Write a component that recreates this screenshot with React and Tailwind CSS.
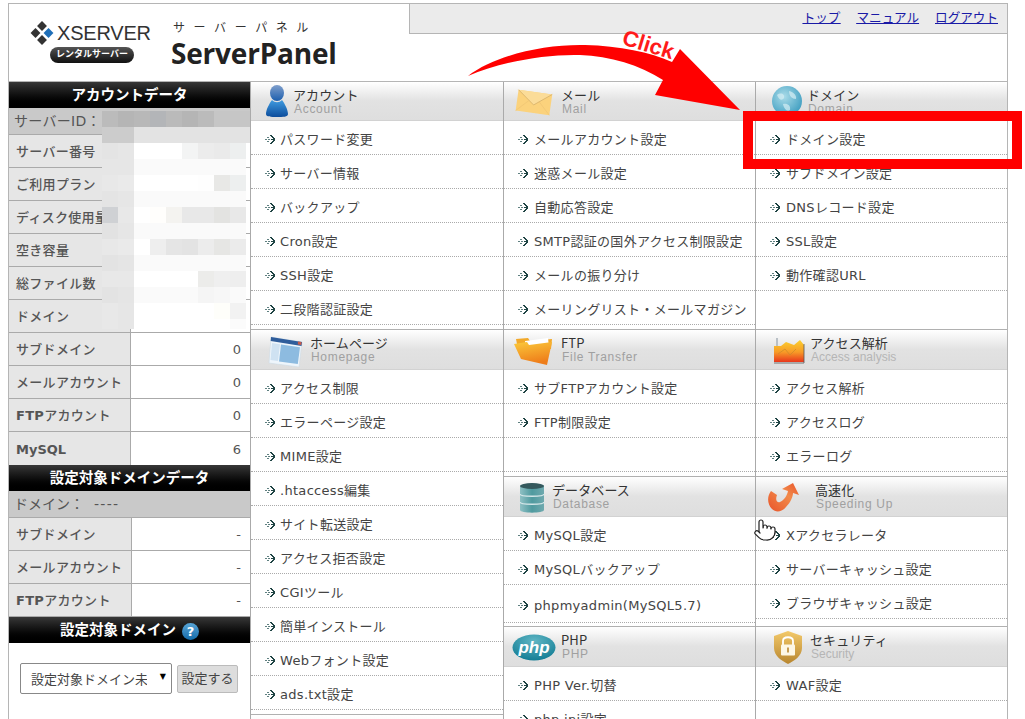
import React from "react";
import { Pointer } from "lucide-react";

// 左カラムのモザイク (16px 角)
const W = "#ffffff";
const F = "#fafafa";
const mosaic = [
  ["#bbbbbb", "#b5b5b5", "#b8b8b8", "#b3b5b8", "#bababa", "#b5b5b5", "#bbbbbb", "#c6c6c6", "#c6c6c6", "#c6c6c6"],
  ["#cccccc", "#cccccc", "#e3e3e3", "#e3e3e3", "#e3e3e3", "#e3e3e3", "#e3e3e3", "#e3e3e3", "#e3e3e3", "#e3e3e3"],
  ["#e4e4e4", "#e6e6e6", W, W, W, "#f3f4f4", "#ececec", "#eaeaea", "#edefef", "transparent"],
  ["#e6e6e6", "#e6e6e6", F, F, F, F, F, F, F, "transparent"],
  ["#e8e8e8", "#eaeaea", W, W, W, W, "#fefefe", "#e8e8e6", "#edefef", "transparent"],
  ["#e4e4e4", "#e6e6e6", F, F, F, F, F, F, F, "transparent"],
  ["#cfd1d4", "#e8e8e8", W, "#fffefc", "#f4f3f0", "#e8e8e8", "#e8e8e8", "#e3e3e1", "#e8e8e8", "transparent"],
  ["#e2e2e2", "#e6e6e6", F, F, F, F, F, F, F, "transparent"],
  ["#e8e8e8", "#eaeaea", W, "#eeeeee", "#e5e5e5", "#e3e3e3", "#ececec", "#e6e6e4", "#ebebeb", "transparent"],
  ["#e3e3e3", "#e5e5e5", F, F, F, F, F, F, F, "transparent"],
  ["#e8e8e8", "#e8e8e8", W, W, W, W, "#ececea", "#efefef", "#eeeeee", "transparent"],
  ["#e3e3e3", "#e5e5e5", F, F, F, F, "#f5f5f5", "#f7f7f7", F, "transparent"],
  ["#e8e8e8", "#e6e6e6", W, W, W, W, W, "#fefefa", "#f2f2f2", "transparent"],
  ["#e8e8e8", "#e6e6e6", W, W, W, W, W, W, "#fbfbfb", "transparent"],
];

function Bullet({ wide }) {
  return (
    <svg width="11" height="11" viewBox="0 0 11 11" className={`${wide ? "mr-[5px]" : "mr-[4px]"} shrink-0`}>
      <g fill="#5f8080">
        <rect x="0" y="5" width="2" height="1" />
        <rect x="2" y="3" width="2" height="1" />
        <rect x="2" y="7" width="2" height="1" />
        <rect x="3" y="5" width="2" height="1" />
      </g>
      <g fill="#1f4444">
        <rect x="5" y="1" width="2" height="1" />
        <rect x="6" y="2" width="2" height="1" />
        <rect x="7" y="3" width="2" height="1" />
        <rect x="8" y="4" width="2" height="1" />
        <rect x="6" y="5" width="4" height="1" />
        <rect x="8" y="6" width="2" height="1" />
        <rect x="7" y="7" width="2" height="1" />
        <rect x="6" y="8" width="2" height="1" />
        <rect x="5" y="9" width="2" height="1" />
      </g>
    </svg>
  );
}

function PersonIcon() {
  return (
    <svg width="24" height="34" viewBox="0 0 24 34" className="absolute left-[14px] top-[2px]">
      <defs>
        <linearGradient id="p1" x1="0" y1="0" x2="0" y2="1">
          <stop offset="0" stopColor="#7f9ecb" />
          <stop offset="1" stopColor="#1d5fae" />
        </linearGradient>
        <linearGradient id="p2" x1="0" y1="0" x2="0" y2="1">
          <stop offset="0" stopColor="#3f9be0" />
          <stop offset="1" stopColor="#0d4d9c" />
        </linearGradient>
      </defs>
      <ellipse cx="12" cy="9" rx="7" ry="8" fill="url(#p1)" />
      <path d="M7 16 C4 20 1 26 1 30 C1 33 6 33 12 33 C18 33 23 33 23 30 C23 26 20 20 17 16 C14 19 10 19 7 16 Z" fill="url(#p2)" />
    </svg>
  );
}

function MailIcon() {
  return (
    <svg width="38" height="30" viewBox="0 0 38 30" className="absolute left-[11px] top-[5px]">
      <g transform="rotate(8 19 15)">
        <rect x="2" y="5" width="34" height="21" fill="#fbd27c" />
        <path d="M2 5 L19 18 L36 5" fill="#fbdc98" stroke="#d8b26a" strokeWidth="0.8" />
        <path d="M2 26 L14 14 M36 26 L24 14" stroke="#efc473" strokeWidth="0.7" />
      </g>
    </svg>
  );
}

function GlobeIcon() {
  return (
    <svg width="32" height="32" viewBox="0 0 32 32" className="absolute left-[15px] top-[3px]">
      <defs>
        <radialGradient id="g1" cx="0.4" cy="0.35" r="0.7">
          <stop offset="0" stopColor="#a9dbe8" />
          <stop offset="1" stopColor="#3e9dc0" />
        </radialGradient>
      </defs>
      <circle cx="16" cy="16" r="15" fill="url(#g1)" />
      <path d="M6 10 C10 7 14 9 13 13 C11 16 8 15 6 10 Z M18 6 C23 7 26 11 25 14 C21 14 18 11 18 6 Z M12 19 C16 18 20 20 19 25 C16 27 13 24 12 19 Z" fill="#d5eef4" opacity="0.7" />
    </svg>
  );
}

function WindowIcon() {
  return (
    <svg width="36" height="32" viewBox="0 0 36 32" className="absolute left-[17px] top-[5px]">
      <path d="M3 2 L34 7 L31 32 L1 28 Z" fill="#eef5fb" stroke="#cfdbe6" strokeWidth="0.6" />
      <path d="M3 2 L34 7 L33.5 11 L2.7 6 Z" fill="#2f5d9b" />
      <path d="M30 6.5 L33.5 7 L33.2 10 L29.8 9.4 Z" fill="#c95b4a" />
      <path d="M4 8 L12 9.2 L10 26 L2.5 25 Z" fill="#cfe2f2" />
      <path d="M13 9.5 L32 12.2 L29.8 29 L11 26.5 Z" fill="#8dbbe0" />
    </svg>
  );
}

function FolderIcon() {
  return (
    <svg width="40" height="32" viewBox="0 0 40 32" className="absolute left-[10px] top-[5px]">
      <defs>
        <linearGradient id="f1" x1="0" y1="0" x2="0.3" y2="1">
          <stop offset="0" stopColor="#fbc93a" />
          <stop offset="1" stopColor="#ee7d1a" />
        </linearGradient>
      </defs>
      <path d="M2 4 L14 3 L16 6 L38 4 L37 14 L4 14 Z" fill="#f2a92a" />
      <path d="M11 6 L34 3 L35 12 L12 13 Z" fill="#ffffff" />
      <path d="M0 9 L13 7 L15 10 L38 7 L33 30 L7 24 Z" fill="url(#f1)" />
    </svg>
  );
}

function ChartIcon() {
  return (
    <svg width="34" height="30" viewBox="0 0 34 30" className="absolute left-[16px] top-[6px]">
      <defs>
        <linearGradient id="c1" x1="0" y1="0" x2="0" y2="1">
          <stop offset="0" stopColor="#fbd12e" />
          <stop offset="0.55" stopColor="#f79a27" />
          <stop offset="1" stopColor="#e8361c" />
        </linearGradient>
      </defs>
      <path d="M4 2 L6 2 L6 14 L4 14 Z" fill="#b9c0c6" />
      <path d="M2 10 L9 10 L14 6 L22 9 L28 4 L32 9 L32 26 L2 26 Z" fill="url(#c1)" />
      <path d="M6 18 L13 13 L18 19 L24 13" fill="none" stroke="#d08a2a" strokeWidth="0.8" />
      <path d="M32 8 L32 27 L2 27" fill="none" stroke="#555555" strokeWidth="0.8" />
    </svg>
  );
}

function DatabaseIcon() {
  return (
    <svg width="26" height="32" viewBox="0 0 26 32" className="absolute left-[15px] top-[5px]">
      <defs>
        <linearGradient id="d1" x1="0" y1="0" x2="1" y2="0">
          <stop offset="0" stopColor="#8fc0c4" />
          <stop offset="0.5" stopColor="#4f9a9f" />
          <stop offset="1" stopColor="#6fa9ae" />
        </linearGradient>
      </defs>
      <path d="M1 4 C1 1 25 1 25 4 L25 28 C25 31.5 1 31.5 1 28 Z" fill="url(#d1)" />
      <ellipse cx="13" cy="4" rx="12" ry="3" fill="#34585c" />
      <path d="M1 12 C1 15 25 15 25 12 M1 20 C1 23 25 23 25 20" fill="none" stroke="#d4e6e8" strokeWidth="1.4" />
    </svg>
  );
}

function SpeedIcon() {
  return (
    <svg width="36" height="32" viewBox="0 0 36 32" className="absolute left-[10px] top-[5px]">
      <defs>
        <linearGradient id="s1" x1="0" y1="1" x2="1" y2="0">
          <stop offset="0" stopColor="#e8542a" />
          <stop offset="0.6" stopColor="#f28a4a" />
          <stop offset="1" stopColor="#e8542a" />
        </linearGradient>
      </defs>
      <path d="M5 9 C1 14 1 22 6 27 C10 31 16 30 20 25 C25 20 27 14 27 11 L33 13 L27 1 L16 7 L22 9 C21 14 18 18 14 20 C11 21 9 18 11 13 Z" fill="url(#s1)" />
    </svg>
  );
}

function PhpIcon() {
  return (
    <svg width="44" height="27" viewBox="0 0 44 27" className="absolute left-[8px] top-[7px]">
      <defs>
        <radialGradient id="h1" cx="0.5" cy="0.25" r="0.8">
          <stop offset="0" stopColor="#5fb6c4" />
          <stop offset="1" stopColor="#0f7a92" />
        </radialGradient>
      </defs>
      <ellipse cx="22" cy="13.5" rx="21.5" ry="13" fill="url(#h1)" />
      <text x="22" y="19" textAnchor="middle" fontFamily="'Liberation Sans', sans-serif" fontSize="17" fontWeight="700" fontStyle="italic" fill="#ffffff">php</text>
    </svg>
  );
}

function ShieldIcon() {
  return (
    <svg width="30" height="35" viewBox="0 0 30 35" className="absolute left-[17px] top-[3px]">
      <defs>
        <linearGradient id="sh1" x1="0" y1="0" x2="0" y2="1">
          <stop offset="0" stopColor="#f3c96a" />
          <stop offset="1" stopColor="#b8862f" />
        </linearGradient>
      </defs>
      <path d="M15 1 L29 6 L29 18 C29 26 21 31 15 34 C9 31 1 26 1 18 L1 6 Z" fill="url(#sh1)" />
      <path d="M10 15 L10 11 C10 6 20 6 20 11 L20 15" fill="none" stroke="#ffffff" strokeWidth="1.8" />
      <rect x="8" y="14.5" width="14" height="11" rx="1" fill="#fdf7e6" />
      <rect x="14.2" y="17.5" width="1.6" height="5" fill="#b8862f" />
    </svg>
  );
}

function Section({ title, sub, icon, slot, first, subClass, rows, lastClass, gapClass, wide }) {
  return (
    <section className={gapClass}>
      <div
        className={`relative flex items-center bg-linear-to-b from-[#ffffff] via-[#e2e2e2] via-50% to-[#dedede] border-b border-[#d2d2d2] ${
          first ? "h-[39px]" : "h-[41px] border-t border-t-[#b0b0b0]"
        }`}
      >
        {icon}
        <div className={`${slot} shrink-0`} />
        <div className="pt-[1px]">
          <div className="font-['Noto_Sans_CJK_JP',sans-serif] text-[13px] leading-[14px] tracking-[0.1px] text-[#333333]">{title}</div>
          <div className={`ml-[1px] font-['Liberation_Sans',sans-serif] text-[12px] leading-[14px] text-[#a0a0a0] ${subClass || "tracking-[0.7px]"}`}>{sub}</div>
        </div>
      </div>
      {rows.map((r, i) => (
        <div
          key={i}
          className={`flex items-center pl-[14px] pt-[4px] text-[13px] tracking-[0.3px] text-[#444444] ${
            r === null ? "" : "border-b border-dotted border-[#aaaaaa]"
          } ${i === rows.length - 1 && lastClass ? lastClass : "h-[34px]"}`}
        >
          {r && (
            <>
              <Bullet wide={wide} />
              <a className="whitespace-nowrap">{r}</a>
            </>
          )}
        </div>
      ))}
    </section>
  );
}

function SideHead({ children }) {
  return (
    <div className="flex h-[26px] items-center justify-center bg-linear-to-b from-[#383838] to-[#000000] pt-[2px] text-[14.5px] font-bold text-white">
      {children}
    </div>
  );
}

function SideRow({ label, value, cell }) {
  return (
    <div className="flex h-[33px] border-b border-[#aaaaaa] text-[13px] text-[#555555]">
      <div className={`${cell} flex shrink-0 items-center overflow-hidden whitespace-nowrap border-r border-[#aaaaaa] bg-[#e6e6e6] pl-[7px] pt-[2px] font-medium tracking-[0.3px]`}>
        {label}
      </div>
      <div className="flex flex-1 items-center justify-end pr-[9px] pt-[2px]">{value}</div>
    </div>
  );
}

function FtpLabel() {
  return (
    <>
      <b>FTP</b>アカウント
    </>
  );
}

function Sidebar() {
  return (
    <aside className="relative w-[242px] shrink-0 border-r border-[#aaaaaa]">
      <SideHead>アカウントデータ</SideHead>
      <div className="flex h-[27px] items-center border-b border-[#aaaaaa] bg-[#c9c9c9] pl-[5px] text-[14px] tracking-[0.3px] text-[#555555]">
        サーバーID：
      </div>
      <SideRow label="サーバー番号" cell="w-[122px]" />
      <SideRow label="ご利用プラン" cell="w-[122px]" />
      <SideRow label="ディスク使用量" cell="w-[122px]" />
      <SideRow label="空き容量" cell="w-[122px]" />
      <SideRow label="総ファイル数" cell="w-[122px]" />
      <SideRow label="ドメイン" cell="w-[122px]" />
      <SideRow label="サブドメイン" value="0" cell="w-[122px]" />
      <SideRow label="メールアカウント" value="0" cell="w-[122px]" />
      <SideRow label={<FtpLabel />} value="0" cell="w-[122px]" />
      <div className="flex h-[33px] text-[13px] text-[#555555]">
        <div className="flex w-[122px] shrink-0 items-center border-r border-[#aaaaaa] bg-[#e6e6e6] pl-[7px] pt-[2px] font-bold">MySQL</div>
        <div className="flex flex-1 items-center justify-end pr-[9px] pt-[2px]">6</div>
      </div>
      <SideHead>設定対象ドメインデータ</SideHead>
      <div className="flex h-[27px] items-center border-b border-[#aaaaaa] bg-[#c9c9c9] pl-[5px] text-[14px] text-[#555555]">
        ドメイン：<span className="ml-[10px] tracking-[1.3px]">----</span>
      </div>
      <SideRow label="サブドメイン" value="-" cell="w-[123px]" />
      <SideRow label="メールアカウント" value="-" cell="w-[123px]" />
      <SideRow label={<FtpLabel />} value="-" cell="w-[123px]" />
      <SideHead>
        <span>設定対象ドメイン</span>
        <span className="ml-[6px] flex h-[17px] w-[17px] items-center justify-center rounded-full bg-linear-to-b from-[#58a6d8] to-[#0f6aa8] text-[13px] font-bold leading-none text-white">
          ?
        </span>
      </SideHead>
      <div className="flex items-start pl-[11px] pt-[20px]">
        <div className="relative">
          <select className="h-[31px] w-[152px] appearance-none rounded-[2px] border border-[#888888] bg-white pl-[10px] pr-[24px] pt-[2px] text-[13px] text-[#444444]">
            <option>設定対象ドメイン未設定</option>
          </select>
          <span className="absolute right-[6px] top-[8px] text-[8px] text-black">▼</span>
        </div>
        <button className="ml-[5px] mt-[2px] h-[28px] w-[61px] rounded-[2px] border border-[#bbbbbb] bg-[#dddddd] text-[13px] text-[#444444]">
          設定する
        </button>
      </div>
      {/* 個人情報のモザイク */}
      <div className="absolute left-[93px] top-[29px] grid grid-cols-[repeat(9,16px)_4px]">
        {mosaic.flatMap((row, y) =>
          row.map((c, x) => (
            <div key={y + "-" + x} className={y === 13 ? "h-[10px]" : "h-[16px]"} style={{ backgroundColor: c }} />
          ))
        )}
      </div>
    </aside>
  );
}

function Header() {
  return (
    <header className="flex h-[77px]">
      <div className="w-[400px] shrink-0 flex">
        <div className="ml-[21px] mt-[17px] w-[121px]">
          <div className="flex items-center">
            <svg width="24" height="24" viewBox="0 0 24 24" className="shrink-0">
              <rect x="8.5" y="1.5" width="7" height="7" transform="rotate(45 12 5)" fill="#333333" />
              <rect x="2" y="8.5" width="7" height="7" transform="rotate(45 5.5 12)" fill="#333333" />
              <rect x="8.5" y="15.5" width="7" height="7" transform="rotate(45 12 19)" fill="#333333" />
              <rect x="15" y="8.5" width="7" height="7" transform="rotate(45 18.5 12)" fill="#1f6fb8" />
            </svg>
            <span className="ml-[3px] font-['Liberation_Sans',sans-serif] text-[20px] leading-[24px] tracking-[-0.2px] text-[#333333]">XSERVER</span>
          </div>
          <div className="ml-[20px] mt-[2px] flex h-[16px] w-[84px] items-center justify-center rounded-full bg-linear-to-b from-[#555555] to-[#111111] text-[9px] font-bold text-white">
            レンタルサーバー
          </div>
        </div>
        <div className="ml-[20px] mt-[16px]">
          <div className="ml-[2px] whitespace-nowrap text-[12px] leading-[17px] tracking-[8.6px] text-[#333333]">サーバーパネル</div>
          <div className="font-['Open_Sans',sans-serif] text-[28px] font-bold leading-[32px] tracking-[-0.2px] text-[#222222]">ServerPanel</div>
        </div>
      </div>
      <nav className="flex h-[30px] flex-1 items-center justify-end gap-[16px] border-b border-l border-[#b5b5b5] bg-[#ebebeb] pr-[9px] text-[12.6px] text-[#1a1aa6] underline">
        <a>トップ</a>
        <a>マニュアル</a>
        <a>ログアウト</a>
      </nav>
    </header>
  );
}

export default function App() {
  return (
    <div className="relative h-[719px] w-[1025px] overflow-hidden bg-white font-['DejaVu_Sans','Noto_Sans_CJK_JP',sans-serif]">
      <div className="ml-[8px] mt-[3px] w-[1000px] border-x border-t border-[#b5b5b5]">
        <Header />
        <div className="flex border-t border-[#b5b5b5]">
          <Sidebar />
          <div className="w-[253px] shrink-0 border-r border-[#aaaaaa]">
            <Section
              first
              title="アカウント"
              sub="Account"
              icon={<PersonIcon />}
              slot="w-[42px]"
              gapClass="mb-[4px]"
              rows={["パスワード変更", "サーバー情報", "バックアップ", "Cron設定", "SSH設定", "二段階認証設定"]}
            />
            <Section
              title="ホームページ"
              sub="Homepage"
              icon={<WindowIcon />}
              slot="w-[59px]"
              gapClass="mb-[4px]"
              rows={[
                "アクセス制限",
                "エラーページ設定",
                "MIME設定",
                ".htaccess編集",
                "サイト転送設定",
                "アクセス拒否設定",
                "CGIツール",
                "簡単インストール",
                "Webフォント設定",
                "ads.txt設定",
              ]}
            />
            <div className="h-[41px] border-t border-[#b0b0b0] bg-linear-to-b from-[#ffffff] to-[#e2e2e2]" />
          </div>
          <div className="w-[252px] shrink-0 border-r border-[#aaaaaa]">
            <Section
              first
              wide
              title="メール"
              sub="Mail"
              icon={<MailIcon />}
              slot="w-[57px]"
              gapClass="mb-[4px]"
              rows={["メールアカウント設定", "迷惑メール設定", "自動応答設定", "SMTP認証の国外アクセス制限設定", "メールの振り分け", "メーリングリスト・メールマガジン"]}
            />
            <Section
              wide
              title="FTP"
              sub="File Transfer"
              icon={<FolderIcon />}
              slot="w-[57px]"
              gapClass="mb-[4px]"
              rows={["サブFTPアカウント設定", "FTP制限設定", ""]}
            />
            <Section
              wide
              title="データベース"
              sub="Database"
              icon={<DatabaseIcon />}
              slot="w-[48px]"
              gapClass="mb-[3px]"
              lastClass="h-[38px]"
              rows={["MySQL設定", "MySQLバックアップ", "phpmyadmin(MySQL5.7)"]}
            />
            <Section
              wide
              title="PHP"
              sub="PHP"
              icon={<PhpIcon />}
              slot="w-[57px]"
              rows={["PHP Ver.切替", "php.ini設定"]}
            />
          </div>
          <div className="w-[251px] shrink-0">
            <Section
              first
              wide
              title="ドメイン"
              sub="Domain"
              icon={<GlobeIcon />}
              slot="w-[51px]"
              gapClass="mb-[4px]"
              rows={["ドメイン設定", "サブドメイン設定", "DNSレコード設定", "SSL設定", "動作確認URL", null]}
            />
            <Section
              wide
              title="アクセス解析"
              sub="Access analysis"
              subClass="tracking-normal text-[#b5b5b5]"
              icon={<ChartIcon />}
              slot="w-[54px]"
              gapClass="mb-[4px]"
              rows={["アクセス解析", "アクセスログ", "エラーログ"]}
            />
            <Section
              wide
              title="高速化"
              sub="Speeding Up"
              icon={<SpeedIcon />}
              slot="w-[59px]"
              gapClass="mb-[7px]"
              rows={["Xアクセラレータ", "サーバーキャッシュ設定", "ブラウザキャッシュ設定"]}
            />
            <Section
              wide
              title="セキュリティ"
              sub="Security"
              subClass="tracking-normal text-[#b5b5b5]"
              icon={<ShieldIcon />}
              slot="w-[54px]"
              rows={["WAF設定", null]}
            />
          </div>
        </div>
      </div>

      {/* 説明用の赤い注釈 */}
      <svg viewBox="460 40 290 80" className="pointer-events-none absolute left-[460px] top-[40px] h-[80px] w-[290px]">
        <path
          d="M468 76 C495 55 545 44 585 45 C620 46 650 52 672 62 L680 49 L740 110 L655 95 L663 80 C640 65 610 56 580 55 C545 54 500 62 468 76 Z"
          fill="#ff0000"
        />
      </svg>
      <div className="pointer-events-none absolute left-[622px] top-[32px] rotate-[17deg] font-['Liberation_Sans',sans-serif] text-[22px] font-bold leading-[26px] text-[#ff1a1a]">
        Click
      </div>
      <div className="pointer-events-none absolute left-[743px] top-[111px] h-[58px] w-[279px] border-[10px] border-[#ff0000]" />
      <Pointer
        size={24}
        strokeWidth={1.2}
        className="pointer-events-none absolute left-[753px] top-[518px] fill-white text-[#222222]"
      />
    </div>
  );
}
